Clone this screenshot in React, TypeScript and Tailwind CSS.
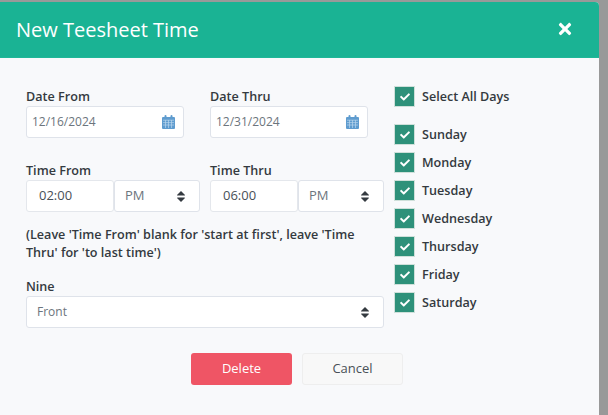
import React from 'react';
import { FaCheck, FaTimes } from 'react-icons/fa';

const days = ['Sunday', 'Monday', 'Tuesday', 'Wednesday', 'Thursday', 'Friday', 'Saturday'];

function Updown() {
  return (
    <svg width="8" height="11" viewBox="0 0 8 11" className="shrink-0">
      <path d="M4 0 L8 4 Q8 4.6 7.4 4.6 H0.6 Q0 4.6 0 4 Z M4 11 L8 7 Q8 6.4 7.4 6.4 H0.6 Q0 6.4 0 7 Z" fill="#343a40" />
    </svg>
  );
}

function CalendarIcon() {
  return (
    <svg width="13" height="14" viewBox="0 0 13 14" className="shrink-0">
      <path d="M1 2 H12 Q13 2 13 3 V13 Q13 14 12 14 H1 Q0 14 0 13 V3 Q0 2 1 2 Z" fill="#5f9ccf" />
      <rect x="2.5" y="0" width="2" height="3.5" rx="1" fill="#5f9ccf" />
      <rect x="8.5" y="0" width="2" height="3.5" rx="1" fill="#5f9ccf" />
      <path d="M1 5.2 H12 M1 7.6 H12 M1 10 H12 M3.5 5 V13 M6.5 5 V13 M9.5 5 V13" stroke="#b9d5ec" strokeWidth="0.7" />
    </svg>
  );
}

function Label({ children }: { children: React.ReactNode }) {
  return <div className="pt-[1px] text-[12.6px] font-semibold leading-[19px] text-[#343a40]">{children}</div>;
}

function DateField({ label, value }: { label: string; value: string }) {
  return (
    <div className="w-[158px]">
      <Label>{label}</Label>
      <div className="flex h-[32px] items-center justify-between rounded-[3px] border border-[#dfe3ea] bg-white pl-[5px] pr-[8px] text-[12px] text-[#6c757d]">
        <span>{value}</span>
        <CalendarIcon />
      </div>
    </div>
  );
}

function TimeField({ label, value, ampm }: { label: string; value: string; ampm: string }) {
  return (
    <div>
      <Label>{label}</Label>
      <div className="flex">
        <div className="flex h-[32px] w-[88px] items-center rounded-[3px] border border-[#e4e7ec] bg-white pl-[12px] text-[13px] text-[#495057]">
          {value}
        </div>
        <div className="flex h-[32px] w-[86px] items-center justify-between rounded-[3px] border border-[#dfe3ea] bg-white pl-[10px] pr-[14px] text-[13px] text-[#6c757d]">
          <span>{ampm}</span>
          <Updown />
        </div>
      </div>
    </div>
  );
}

function DayCheck({ label }: { label: string }) {
  return (
    <div className="flex h-[21px] items-center gap-[7px]">
      <div className="flex h-[21px] w-[21px] items-center justify-center border border-[#cfe0da] bg-[#2e917a]">
        <FaCheck size={10} className="text-white" />
      </div>
      <span className="pt-[1px] text-[12.6px] font-semibold text-[#343a40]">{label}</span>
    </div>
  );
}

export default function App() {
  return (
    <div className="h-[415px] w-[608px] overflow-hidden bg-[#999999] pr-[9px] pt-[2px] font-['Open_Sans',sans-serif]">
      <div className="h-full rounded-tr-[4px] bg-[#f8f9fb]">
        {/* Header */}
        <div className="flex h-[56px] items-center justify-between rounded-tr-[4px] border-b border-[#1fb798] bg-[#1ab394] pl-[16px] pr-[25px]">
          <h1 className="text-[20px] font-normal text-white">New Teesheet Time</h1>
          <FaTimes size={18} className="mb-[2px] text-white" />
        </div>

        {/* Body */}
        <div className="flex pl-[26px] pt-[28px]">
          <div className="w-[358px]">
            <div className="flex gap-[26px]">
              <DateField label="Date From" value="12/16/2024" />
              <DateField label="Date Thru" value="12/31/2024" />
            </div>
            <div className="mt-[22px] flex gap-[10px]">
              <TimeField label="Time From" value="02:00" ampm="PM" />
              <TimeField label="Time Thru" value="06:00" ampm="PM" />
            </div>
            <p className="mt-[14px] text-[12.6px] font-semibold leading-[18px] text-[#343a40]">
              (Leave 'Time From' blank for 'start at first', leave 'Time Thru' for 'to last time')
            </p>
            <div className="mt-[14px]">
              <Label>Nine</Label>
              <div className="flex h-[32px] items-center justify-between rounded-[3px] border border-[#dfe3ea] bg-white pl-[10px] pr-[14px] text-[12px] text-[#6c757d]">
                <span>Front</span>
                <Updown />
              </div>
            </div>
          </div>

          <div className="ml-[10px]">
            <DayCheck label="Select All Days" />
            <div className="mt-[17px] flex flex-col gap-[7px]">
              {days.map((d) => (
                <DayCheck key={d} label={d} />
              ))}
            </div>
          </div>
        </div>

        {/* Footer */}
        <div className="mt-[25px] flex gap-[10px] pl-[191px]">
          <button className="h-[32px] w-[101px] rounded-[3px] bg-[#ef5565] text-[13px] font-medium text-white">Delete</button>
          <button className="h-[32px] w-[101px] rounded-[3px] border border-[#eeeeee] bg-[#f8f8f8] text-[13px] text-[#495057]">Cancel</button>
        </div>
      </div>
    </div>
  );
}
